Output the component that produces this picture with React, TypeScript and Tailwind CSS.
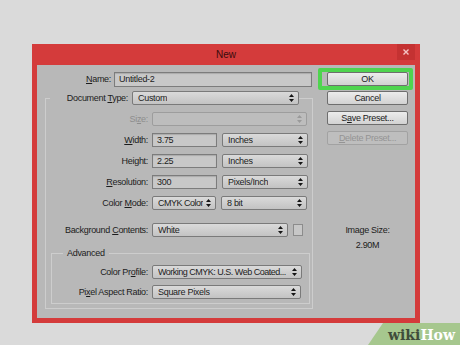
import type { ReactNode } from 'react';
import clsx from 'clsx';

function Caret({ dim }: { dim?: boolean }) {
  return (
    <svg width="5" height="8" viewBox="0 0 5 8" className="shrink-0">
      <path d="M2.5 0L5 3H0Z M0 5H5L2.5 8Z" fill={dim ? '#9a9a9a' : '#151515'} />
    </svg>
  );
}

function Select({
  className,
  children,
  dim,
  tight,
}: {
  className: string;
  children?: ReactNode;
  dim?: boolean;
  tight?: boolean;
}) {
  return (
    <div
      className={clsx(
        'flex h-[14px] shrink-0 items-center justify-between gap-[1px] rounded-[2px] border pl-[5px] pr-[4px]',
        dim
          ? 'border-[#9d9d9d] bg-[#bdbdbd]'
          : 'border-[#7a7a7a] bg-linear-to-b from-[#dadada] to-[#c3c3c3]',
        className,
      )}
    >
      <span className={clsx('overflow-hidden whitespace-pre', tight && 'tracking-[-0.5px]')}>{children}</span>
      <Caret dim={dim} />
    </div>
  );
}

function Input({ className, children }: { className: string; children: ReactNode }) {
  return (
    <div
      className={clsx(
        'flex h-[14px] shrink-0 items-center border border-[#7c7c7c] bg-[#c8c8c8] px-[4px] shadow-[inset_0_1px_1px_rgba(0,0,0,0.15)]',
        className,
      )}
    >
      {children}
    </div>
  );
}

function Row({ label, wide, dim, children }: { label: ReactNode; wide?: boolean; dim?: boolean; children: ReactNode }) {
  return (
    <div className="flex h-[14px] items-center">
      <span
        className={clsx(
          'shrink-0 pr-[4px] text-right',
          wide ? 'w-[106px]' : 'w-[100px]',
          dim && 'text-[#8d8d8d]',
        )}
      >
        {label}
      </span>
      {children}
    </div>
  );
}

function Button({ children, dim }: { children: ReactNode; dim?: boolean }) {
  return (
    <div
      className={clsx(
        'flex h-[14px] w-[81px] items-center justify-center rounded-[2px] border',
        dim
          ? 'border-[#a2a2a2] bg-[#bebebe] text-[#949494]'
          : 'border-[#6e6e6e] bg-linear-to-b from-[#ececec] to-[#d2d2d2]',
      )}
    >
      {children}
    </div>
  );
}

export default function App() {
  return (
    <div className="relative h-[345px] w-[460px] overflow-hidden bg-[#dadada] pl-[32px] pt-[44px] font-['Liberation_Sans',Arial,sans-serif] text-[9px] leading-none tracking-[-0.3px] text-[#1c1c1c]">
      <div className="w-[388px] bg-[#d43b3b] px-[5px] pb-[5px]">
        {/* title bar */}
        <div className="grid h-[21px] grid-cols-[1fr_auto_1fr] items-start">
          <span />
          <span className="pt-[6px] text-[10px] tracking-normal text-[#3a0c0c]">New</span>
          <div className="flex h-[16px] w-[18px] items-center justify-center justify-self-end bg-[#c43232]">
            <svg width="6" height="6" viewBox="0 0 6 6">
              <path d="M0.5 0.5L5.5 5.5M5.5 0.5L0.5 5.5" stroke="#f4c4c4" strokeWidth="1.4" />
            </svg>
          </div>
        </div>

        {/* body */}
        <div className="flex h-[253px] bg-[#b8b8b8]">
          <div className="w-[279px] shrink-0 pt-[7px]">
            <div className="flex h-[15px] items-center">
              <span className="w-[77px] shrink-0 pr-[3px] text-right">
                <u>N</u>ame:
              </span>
              <Input className="h-[15px] w-[198px]">Untitled-2</Input>
            </div>

            <fieldset className="ml-[8px] mt-[4px] w-[268px] border border-[#cdcdcd] pb-[4px]">
              <legend className="ml-[4px]">
                <div className="flex items-center">
                  <span className="w-[82px] shrink-0 pr-[4px] text-right">
                    Document <u>T</u>ype:
                  </span>
                  <Select className="w-[167px]">Custom</Select>
                </div>
              </legend>

              <div className="flex flex-col pt-[7px]">
                <Row wide dim label={<>Si<u>z</u>e:</>}>
                  <Select dim className="w-[155px]" />
                </Row>
                <div className="mt-[7px]">
                  <Row wide label={<><u>W</u>idth:</>}>
                    <Input className="w-[65px]">3.75</Input>
                    <Select className="ml-[5px] w-[86px]">Inches</Select>
                  </Row>
                </div>
                <div className="mt-[7px]">
                  <Row wide label={<>Hei<u>g</u>ht:</>}>
                    <Input className="w-[65px]">2.25</Input>
                    <Select className="ml-[5px] w-[86px]">Inches</Select>
                  </Row>
                </div>
                <div className="mt-[7px]">
                  <Row wide label={<><u>R</u>esolution:</>}>
                    <Input className="w-[65px]">300</Input>
                    <Select className="ml-[5px] w-[86px]">Pixels/Inch</Select>
                  </Row>
                </div>
                <div className="mt-[7px]">
                  <Row wide label={<>Color <u>M</u>ode:</>}>
                    <Select tight className="w-[64px] pl-[4px] pr-[3px]">CMYK Color</Select>
                    <Select className="ml-[5px] w-[86px]">8 bit</Select>
                  </Row>
                </div>
                <div className="mt-[13px]">
                  <Row wide label={<>Background <u>C</u>ontents:</>}>
                    <Select className="w-[136px]">White</Select>
                    <div className="ml-[5px] h-[12px] w-[10px] border border-[#8c8c8c] bg-[#c7c7c7]" />
                  </Row>
                </div>

                <fieldset className="ml-[5px] mt-[10px] w-[259px] border border-[#cdcdcd] pb-[4px]">
                  <legend className="ml-[11px] px-[4px] leading-[12px]">Advanced</legend>
                  <div className="flex flex-col gap-[6px] pt-[6px]">
                    <Row label={<>Color Pr<u>o</u>file:</>}>
                      <Select tight className="w-[150px] pl-[4px] pr-[3px]">Working CMYK: U.S. Web Coated...</Select>
                    </Row>
                    <Row label={<>Pi<u>x</u>el Aspect Ratio:</>}>
                      <Select className="w-[149px]">Square Pixels</Select>
                    </Row>
                  </div>
                </fieldset>
              </div>
            </fieldset>
          </div>

          {/* buttons */}
          <div className="flex flex-col pl-[11px] pt-[7px]">
            <div className="relative">
              <Button>OK</Button>
              <div className="absolute -bottom-[4px] -left-[9px] -right-[5px] -top-[4px] rounded-[2px] border-[4px] border-[#4fd44f]" />
            </div>
            <div className="mt-[5px]">
              <Button>Cancel</Button>
            </div>
            <div className="mt-[6px]">
              <Button>
                S<u>a</u>ve Preset...
              </Button>
            </div>
            <div className="mt-[6px]">
              <Button dim>
                <u>D</u>elete Preset...
              </Button>
            </div>
            <div className="mt-[79px] w-[81px] text-center leading-[12px]">Image Size:</div>
            <div className="mt-[3px] w-[81px] text-center leading-[12px]">2.90M</div>
          </div>
        </div>
      </div>

      {/* wikiHow watermark */}
      <div className="absolute bottom-0 right-0 h-[22px] w-[92px]">
        <svg width="92" height="22" viewBox="0 0 92 22" className="absolute inset-0">
          <polygon points="15,0 92,0 92,22 0,22" fill="#a6c78e" />
        </svg>
        <span className="absolute bottom-[3px] right-[5px] font-['DejaVu_Serif',serif] text-[14px] font-bold leading-none tracking-normal">
          <span className="text-[#3f4c3b]">wiki</span>
          <span className="text-white">How</span>
        </span>
      </div>
    </div>
  );
}
